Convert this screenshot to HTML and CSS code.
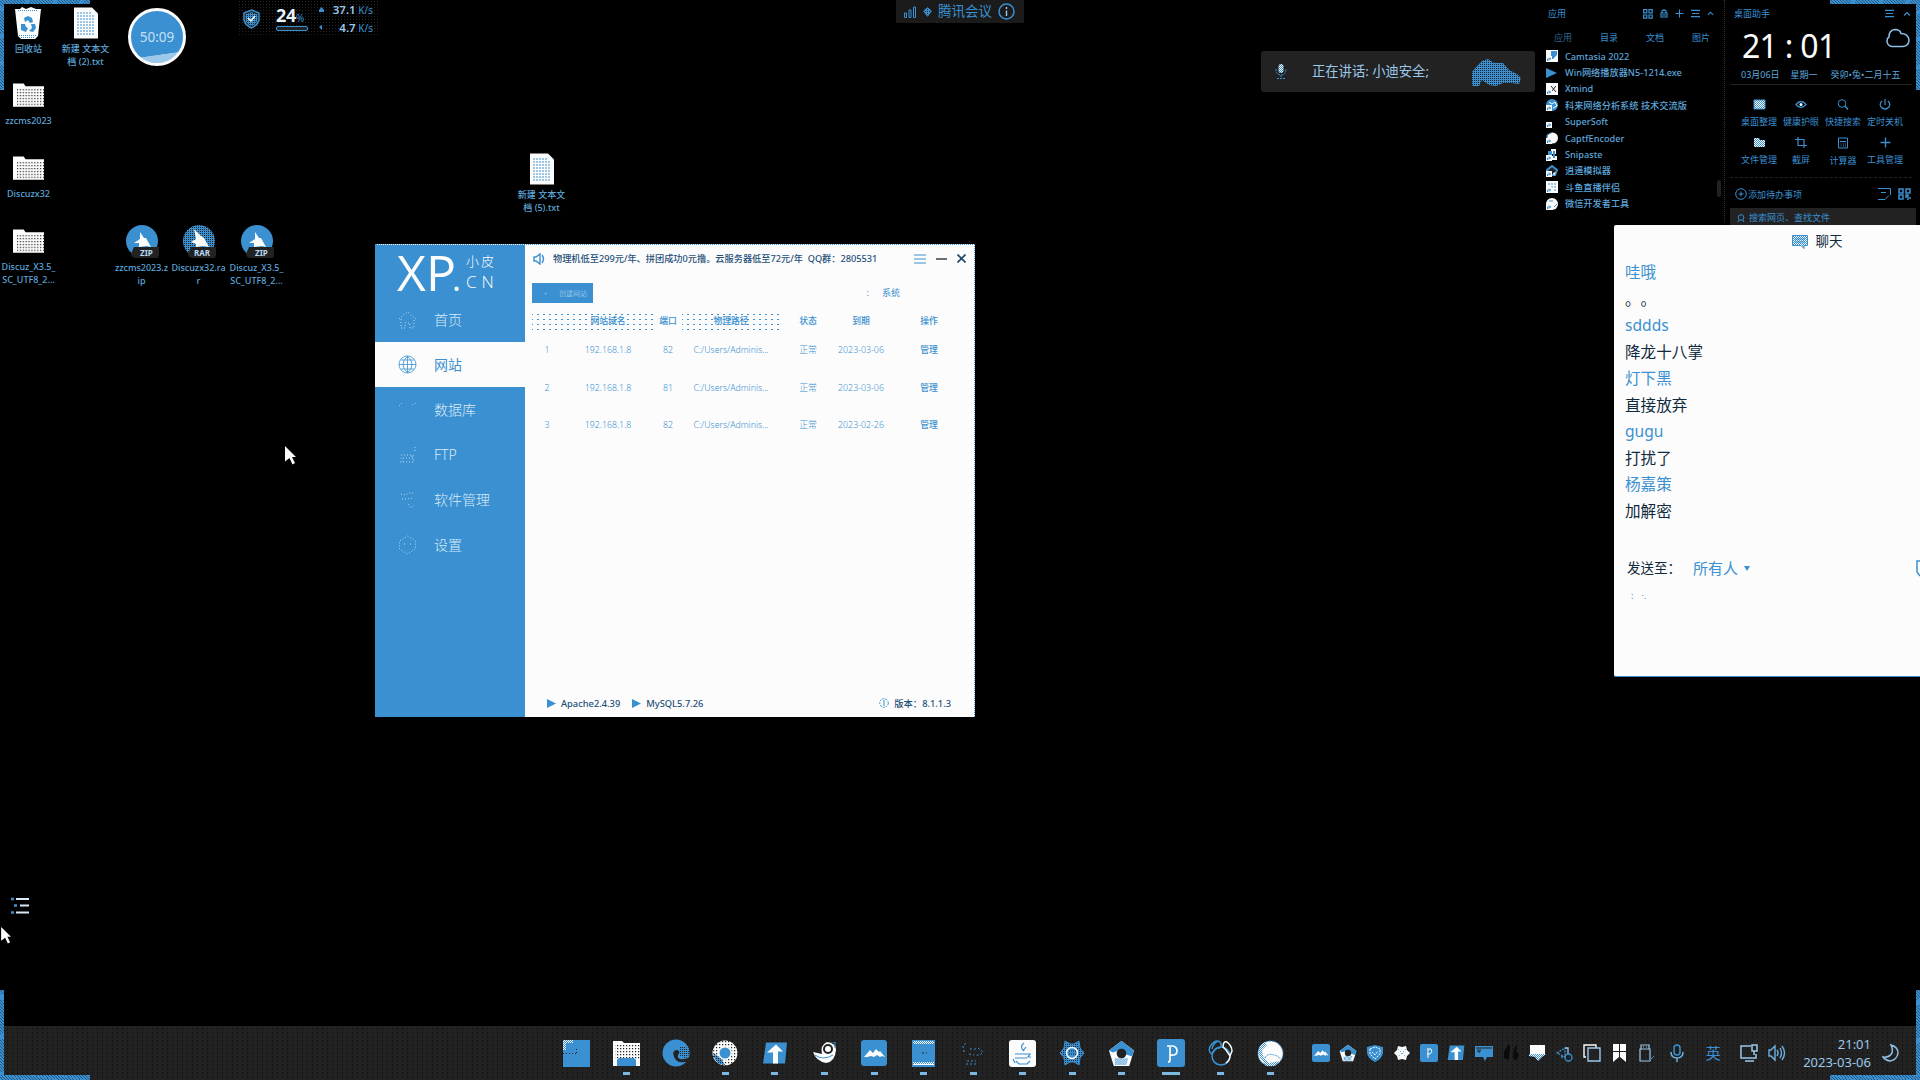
FILE: index.html
```html
<!DOCTYPE html>
<html lang="zh-CN">
<head>
<meta charset="utf-8">
<title>桌面</title>
<link rel="stylesheet" href="styles.css">
</head>
<body>
<svg class="defs" aria-hidden="true">
  <defs>
    <pattern id="weave" width="3" height="3" patternUnits="userSpaceOnUse"><path fill="#fcfcfc" d="M0 0h3v3H0z"/><path fill="#222" d="M1 1h1.2v1.2H1z"/></pattern>
    <pattern id="mesh" width="2" height="2" patternUnits="userSpaceOnUse"><path fill="#3a90d0" d="M0 0h2v2H0z"/><path fill="#222" d="M0 0h1v1H0z"/></pattern>
    <pattern id="frost" width="2" height="2" patternUnits="userSpaceOnUse"><path fill="#fcfcfc" d="M0 0h2v2H0z"/><path fill="#3a90d0" d="M0 0h1v1H0zM1 1h1v1H1z"/></pattern>
    <symbol id="folder" viewBox="0 0 32 26"><path fill="#fcfcfc" d="M0 1h11l2 3h19v21H0z"/><path fill="url(#weave)" d="M4 6h28v18H4z"/></symbol>
    <symbol id="file" viewBox="0 0 24 31"><path fill="#fcfcfc" d="M0 0h18l6 6v25H0z"/><path stroke="#3a90d0" stroke-dasharray="2 1" d="M3 5.500h14M3 8.500h18M3 11.500h18M3 14.500h18M3 17.500h18M3 20.500h18M3 23.500h18M3 26.500h18"/></symbol>
    <symbol id="cursor" viewBox="0 0 12 19"><path fill="#fcfcfc" d="M0 0l11 11H7l3 6-2.500 1.500L4.500 12 0 15.500z"/></symbol>
    <symbol id="peak" viewBox="0 0 26 26"><rect width="26" height="26" rx="3" fill="#3a90d0"/><path fill="#fcfcfc" d="M3 17l6-7 3 3 3-4 3 3 1-1 5 6-3-1-2 1-3-2-3 2-3-1-4 1z"/></symbol>
    <symbol id="arrowup" viewBox="0 0 26 24"><path fill="#3a90d0" d="M4 1h21l-2 21H1z"/><path fill="#fcfcfc" d="M14 3l7 7h-5v12h-5V11H5z"/></symbol>
    <symbol id="penta" viewBox="0 0 28 28"><path fill="#fcfcfc" d="M14 1l13 10-5 16H6L1 11z"/><path fill="#3a90d0" d="M14 1l13 10-2 6-6-2-5-5-9 3-4-2z"/><path fill="url(#frost)" d="M7 19l14 0-2 7H7z"/><circle cx="14" cy="14" r="5" fill="#222"/></symbol>
    <symbol id="grid4" viewBox="0 0 10 10"><path fill="none" stroke="#3a90d0" stroke-width="1.200" d="M.6 .6h3.200v3.200H.6zM6 .6h3.200v3.200H6zM.6 6h3.200v3.200H.6zM6 6h3.200v3.200H6z"/></symbol>
    <symbol id="bars" viewBox="0 0 10 10"><path stroke="#3a90d0" stroke-width="1.200" d="M0 1.500h10M1 5h8M0 8.500h10"/></symbol>
    <symbol id="caret" viewBox="0 0 8 8"><path fill="none" stroke="#3a90d0" stroke-width="1.200" d="M1 5.500l3-3 3 3"/></symbol>
    <symbol id="plus" viewBox="0 0 10 10"><path stroke="#3a90d0" stroke-width="1.200" d="M5 .5v9M.5 5h9"/></symbol>
    <symbol id="link" viewBox="0 0 6 6"><path fill="#fcfcfc" d="M0 0h6v6H0z"/><path fill="none" stroke="#3a90d0" d="M1.500 5V3h3M3 1.500L4.500 3 3 4.500"/></symbol>
    <symbol id="play" viewBox="0 0 9 9"><path fill="#3a90d0" d="M0 0l9 4.500L0 9z"/></symbol>
  </defs>
</svg>

<main class="desktop">
  <i class="corner tl"></i><i class="corner tr"></i>

  <div class="shortcut" style="left:0;top:7px"><svg width="27" height="32" viewBox="0 0 27 32"><path fill="#fcfcfc" d="M0 2l5 0 2-2 4 2 5-2 5 2 5 0-3 27-3 3H6l-3-3z"/><path fill="#3a90d0" d="M9 11l4-2 4 2 1 4-3 1-2-3-3 2zM6 17l4 0 1 3 2 1-2 4-5-2zM16 17h4l1 4-3 4-4-1 3-3z"/><path stroke="#3a90d0" stroke-dasharray="1 1" d="M4 28.500h18M6 30.500h14M3 3.500h20"/></svg><span>回收站</span></div>
  <div class="shortcut" style="left:57px;top:7px"><svg width="24" height="32"><use href="#file"/></svg><span>新建 文本文<br>档 (2).txt</span></div>
  <div class="shortcut" style="left:0;top:79px"><svg width="31" height="32"><use href="#folder"/></svg><span>zzcms2023</span></div>
  <div class="shortcut" style="left:0;top:152px"><svg width="31" height="32"><use href="#folder"/></svg><span>Discuzx32</span></div>
  <div class="shortcut" style="left:0;top:225px"><svg width="31" height="32"><use href="#folder"/></svg><span>Discuz_X3.5_<br>SC_UTF8_2...</span></div>
  <div class="shortcut" style="left:113px;top:225px"><svg width="34" height="33" viewBox="0 0 34 33"><circle cx="17" cy="16" r="16" fill="#3a90d0"/><path fill="#222" d="M9 22h25v8q0 3-3 3H12q-6 0-6-4z"/><path fill="#fcfcfc" d="M15 7l4 6 2 0 5 9-4-1-8 1 0-4-5 0 6-4z"/><text x="15" y="31" class="tag">ZIP</text></svg><span>zzcms2023.z<br>ip</span></div>
  <div class="shortcut" style="left:170px;top:225px"><svg width="34" height="33" viewBox="0 0 34 33"><circle cx="17" cy="16" r="16" fill="url(#mesh)"/><path fill="#222" d="M9 22h25v8q0 3-3 3H12q-6 0-6-4z"/><path fill="#fcfcfc" d="M12 4l7 7 3 2 5 9-6-1-7 1 0-3-5-2 5-3z"/><text x="12" y="31" class="tag">RAR</text></svg><span>Discuzx32.ra<br>r</span></div>
  <div class="shortcut" style="left:228px;top:225px"><svg width="34" height="33" viewBox="0 0 34 33"><circle cx="17" cy="16" r="16" fill="#3a90d0"/><path fill="#222" d="M9 22h25v8q0 3-3 3H12q-6 0-6-4z"/><path fill="#fcfcfc" d="M15 7l4 6 2 0 5 9-4-1-8 1 0-4-5 0 6-4z"/><text x="15" y="31" class="tag">ZIP</text></svg><span>Discuz_X3.5_<br>SC_UTF8_2...</span></div>
  <div class="shortcut" style="left:513px;top:153px"><svg width="24" height="32"><use href="#file"/></svg><span>新建 文本文<br>档 (5).txt</span></div>

  <div class="timer"><span>50:09</span></div>

  <section class="monitor">
    <svg width="17" height="20" viewBox="0 0 17 20"><path fill="#222" stroke="#3a90d0" stroke-width="1.500" d="M8.500 1l7.500 3v7q-1 5-7.500 8Q2 16 1 11V4z"/><path fill="url(#mesh)" d="M8.500 3l6 2.500V11q-1 4-6 6-5-2-6-6V5.500z"/><path fill="none" stroke="#fcfcfc" stroke-width="1.500" d="M5 9l3 3 4-5"/></svg>
    <div class="usage"><p><b>24</b>%</p><i></i></div>
    <div class="rates"><p><svg width="5" height="5"><path fill="#3a90d0" d="M0 3l2.500-3L5 3v2H0z"/></svg><span><b>37.1</b> K/s</span></p><p><svg width="5" height="5"><path fill="#3a90d0" d="M0 2l3-2v5z"/></svg><span><b>4.7</b> K/s</span></p></div>
  </section>

  <section class="meeting">
    <svg width="13" height="12" viewBox="0 0 13 12"><path fill="none" stroke="#3a90d0" d="M.5 7h2v4.500h-2zM5 4h2v7.500H5zM9.500 1h2v10.500h-2z"/></svg>
    <svg width="9" height="10" viewBox="0 0 9 10"><path fill="url(#mesh)" stroke="#3a90d0" d="M4.500 .7L8.300 4 4.500 9.300 .7 4z"/></svg>
    <span>腾讯会议</span>
    <svg width="17" height="17" viewBox="0 0 17 17"><circle cx="8.500" cy="8.500" r="7.500" fill="none" stroke="#3a90d0" stroke-width="1.500"/><path stroke="#9cc8ea" stroke-width="1.400" d="M8.500 4v2M8.500 7.500v5.500"/></svg>
  </section>

  <section class="speaking">
    <svg width="12" height="17" viewBox="0 0 12 17"><rect x="3.500" y="1" width="5" height="9" rx="2.500" fill="url(#frost)"/><path fill="none" stroke="#3a90d0" stroke-dasharray="2 1" d="M1 6q0 6 5 6t5-6M6 12v3M2 15.500h8"/></svg>
    <span>正在讲话: 小迪安全;</span>
    <svg class="wave" width="49" height="28" viewBox="0 0 49 28"><path fill="url(#mesh)" d="M0 14L5 8 10 3l6-2 6 4 9 0 6 7 8 4 4 4-2 6-8-1-8 0-7 3-7-1-7-5-3 6-4 1-5-3z"/></svg>
  </section>

  <section class="apps">
    <header><span>应用</span><svg width="10" height="10"><use href="#grid4"/></svg><svg width="8" height="9" viewBox="0 0 8 9"><path fill="none" stroke="#3a90d0" stroke-width="1.200" d="M2 4V2q2-2 4 0v2M1 4h6v4H1zM2 6h4"/></svg><svg width="9" height="9"><use href="#plus"/></svg><svg width="9" height="9"><use href="#bars"/></svg><svg width="7" height="7"><use href="#caret"/></svg></header>
    <nav><span class="on">应用</span><span>目录</span><span>文档</span><span>图片</span></nav>
    <ul>
      <li><svg width="12" height="12" viewBox="0 0 12 12"><rect width="12" height="12" fill="#fcfcfc"/><path fill="#3a90d0" d="M5 1h6v4L7 9H5z"/><use href="#link" y="6" width="6" height="6"/></svg>Camtasia 2022</li>
      <li><svg width="12" height="12" viewBox="0 0 12 12"><path fill="#3a90d0" d="M0 1l11 5-11 5z"/></svg>Win网络播放器N5-1214.exe</li>
      <li><svg width="12" height="12" viewBox="0 0 12 12"><rect width="12" height="12" fill="#fcfcfc"/><path stroke="#222" d="M5 3l5 6M10 3L5 9"/><use href="#link" y="6" width="6" height="6"/></svg>Xmind</li>
      <li><svg width="12" height="12" viewBox="0 0 12 12"><circle cx="6" cy="6" r="6" fill="#3a90d0"/><path stroke="#fcfcfc" fill="none" d="M3 3l3 2 3-2 2 4-4 2"/><use href="#link" y="6" width="6" height="6"/></svg>科来网络分析系统 技术交流版</li>
      <li><svg width="12" height="12" viewBox="0 0 12 12"><use href="#link" y="6" width="6" height="6"/></svg>SuperSoft</li>
      <li><svg width="12" height="12" viewBox="0 0 12 12"><circle cx="6.500" cy="6" r="5.500" fill="#fcfcfc"/><path stroke="#3a90d0" fill="none" d="M1 6V3l4-2"/><use href="#link" y="6" width="6" height="6"/></svg>CaptfEncoder</li>
      <li><svg width="12" height="12" viewBox="0 0 12 12"><path fill="#fcfcfc" d="M5 0h5v5H5zM6 7h5v4H6z"/><path fill="#3a90d0" d="M2 2h4v4H2zM7 2h2v7H7z"/><use href="#link" y="6" width="6" height="6"/></svg>Snipaste</li>
      <li><svg width="12" height="12" viewBox="0 0 12 12"><path fill="#222" stroke="#3a90d0" stroke-width="2" d="M6 1l5 4-2 5H3L1 5z"/><path fill="#fcfcfc" d="M7 8l3-1-2 4z"/><use href="#link" y="6" width="6" height="6"/></svg>逍遥模拟器</li>
      <li><svg width="12" height="12" viewBox="0 0 12 12"><rect width="12" height="12" fill="#fcfcfc"/><path stroke="#3a90d0" stroke-dasharray="2 1" d="M2 3h9M5 6h6M8 9h3"/><use href="#link" y="6" width="6" height="6"/></svg>斗鱼直播伴侣</li>
      <li><svg width="12" height="12" viewBox="0 0 12 12"><circle cx="6" cy="6" r="6" fill="#fcfcfc"/><path stroke="#3a90d0" d="M3 3h4M8 9l3-3"/><use href="#link" y="6" width="6" height="6"/></svg>微信开发者工具</li>
    </ul>
    <i class="thumb"></i>
  </section>

  <section class="helper">
    <header><span>桌面助手</span><svg width="9" height="9"><use href="#bars"/></svg><svg width="8" height="8"><use href="#caret"/></svg></header>
    <div class="clock"><b>21 : 01</b><svg width="24" height="20" viewBox="0 0 24 20"><path fill="#000" stroke="#8fc0e6" stroke-width="1.500" d="M6 18.500q-5-1-5-5.500 0-3 2-4 0-7 6-7.500 5 0 6 4 7 0 8 6.500 0 6-6 6.500z"/></svg></div>
    <div class="dates"><span>03月06日</span><span>星期一</span><span>癸卯•兔•二月十五</span></div>
    <div class="tools">
      <div><svg width="13" height="11" viewBox="0 0 13 11"><path fill="url(#frost)" stroke="#3a90d0" d="M1 1h11v9H1z"/></svg>桌面整理</div>
      <div><svg width="12" height="11" viewBox="0 0 12 11"><path fill="none" stroke="#3a90d0" stroke-width="1.300" d="M1 5.500q5-6 10 0-5 6-10 0z"/><circle cx="6" cy="5.500" r="1.500" fill="#fcfcfc"/></svg>健康护眼</div>
      <div><svg width="12" height="11" viewBox="0 0 12 11"><circle cx="5" cy="4.500" r="3.800" fill="none" stroke="#3a90d0"/><path stroke="#3a90d0" stroke-width="1.400" d="M8 7l3 3.500"/></svg>快捷搜索</div>
      <div><svg width="12" height="11" viewBox="0 0 12 11"><path fill="none" stroke="#3a90d0" stroke-width="1.200" d="M6 0v6M3 2q-3 3-1 6 4 4 8 0 2-3-1-6"/></svg>定时关机</div>
      <div><svg width="13" height="11" viewBox="0 0 13 11"><path fill="url(#frost)" d="M1 1h5l1 2h5v7H1z"/></svg>文件管理</div>
      <div><svg width="12" height="11" viewBox="0 0 12 11"><path fill="none" stroke="#3a90d0" stroke-width="1.200" d="M3 0v8.500h9M0 2.500h9V11"/></svg>截屏</div>
      <div><svg width="12" height="12" viewBox="0 0 12 12"><path fill="none" stroke="#3a90d0" d="M1.500 1h9v10h-9zM3 4.500h6M3.500 7h1M6 7h1M8 7h1M3.500 9h1M6 9h1M8 9h1"/></svg>计算器</div>
      <div><svg width="11" height="11"><use href="#plus"/></svg>工具管理</div>
    </div>
    <div class="todo"><svg width="12" height="12" viewBox="0 0 12 12"><circle cx="6" cy="6" r="5.300" fill="none" stroke="#3a90d0"/><path stroke="#3a90d0" d="M6 3.500v5M3.500 6h5"/></svg><span>添加待办事项</span><svg width="13" height="12" viewBox="0 0 13 12"><path fill="none" stroke="#3a90d0" d="M0 .5h12.500V7M3 4.500h5M0 11.500h7l4-4"/></svg><svg width="13" height="12" viewBox="0 0 13 12"><path fill="none" stroke="#3a90d0" stroke-width="1.500" d="M1 1h4v4H1zM8 1h4v4H8zM1 7h4v4H1zM8 7h2v2H8zM11 10h2M9 11h2"/></svg></div>
    <div class="find"><svg width="8" height="8" viewBox="0 0 8 8"><circle cx="4" cy="3.500" r="2.800" fill="none" stroke="#3a90d0"/><path stroke="#3a90d0" d="M2 6L1 8M6 6l1 2"/></svg>搜索网页、查找文件</div>
  </section>

  <section class="panel">
    <aside>
      <div class="brand"><b>XP<i>.</i></b><p><span>小皮</span><span class="cn">CN</span></p></div>
      <a><svg width="19" height="18" viewBox="0 0 19 18"><path d="M1 8l8.500-7L18 8M3 8v9h4v-5h5v5h4V8"/></svg>首页</a>
      <a class="on"><svg width="19" height="19" viewBox="0 0 19 19"><circle cx="9.500" cy="9.500" r="8.500"/><path d="M9.500 1v17M1 9.500h17M3 5h13M3 14h13M9.500 1q-9 8.500 0 17M9.500 1q9 8.500 0 17"/></svg>网站</a>
      <a><svg width="19" height="18" viewBox="0 0 19 18"><path d="M1 5l3-3M14 4l4-2"/></svg>数据库</a>
      <a><svg width="19" height="18" viewBox="0 0 19 18"><path d="M17 1v6M2 16h15M3 9h12v3H3l2 4M14 10l2 6"/></svg>FTP</a>
      <a><svg width="19" height="18" viewBox="0 0 19 18"><path d="M3 3l5 1 3-2 5 0M4 8h5l6-1M10 13l3 4 3-3"/></svg>软件管理</a>
      <a><svg width="19" height="20" viewBox="0 0 19 20"><path d="M9.500 1l8 5v8l-8 5-8-5V6zM6 9h1M12 9h1"/></svg>设置</a>
    </aside>
    <div class="content">
      <header><svg width="12" height="12" viewBox="0 0 12 12"><path fill="none" stroke="#3a90d0" stroke-width="1.400" d="M1 4h2l4-3v10L3 8H1zM9 2q3 4 0 8"/></svg><span>物理机低至299元/年、拼团成功0元撸。云服务器低至72元/年 &nbsp;QQ群：2805531</span>
        <svg width="12" height="10" viewBox="0 0 12 10"><path stroke="#3a90d0" stroke-width="1.200" d="M0 1h12M0 5h12M0 9h12"/></svg><svg width="11" height="10" viewBox="0 0 11 10"><path stroke="#222" stroke-width="1.300" d="M0 5h11"/></svg><svg width="9" height="9" viewBox="0 0 9 9"><path stroke="#1b4668" stroke-width="1.600" d="M.5 .5l8 8M8.500 .5l-8 8"/></svg></header>
      <div class="bar"><button><i>·</i>创建网站</button><span><i>:</i>系统</span></div>
      <div class="grid head"><span></span><span>网站域名</span><span>端口</span><span>物理路径</span><span>状态</span><span>到期</span><span>操作</span></div>
      <div class="grid"><span>1</span><span>192.168.1.8</span><span>82</span><span>C:/Users/Adminis...</span><span>正常</span><span>2023-03-06</span><b>管理</b></div>
      <div class="grid"><span>2</span><span>192.168.1.8</span><span>81</span><span>C:/Users/Adminis...</span><span>正常</span><span>2023-03-06</span><b>管理</b></div>
      <div class="grid"><span>3</span><span>192.168.1.8</span><span>82</span><span>C:/Users/Adminis...</span><span>正常</span><span>2023-02-26</span><b>管理</b></div>
      <footer><svg width="9" height="9"><use href="#play"/></svg><span>Apache2.4.39</span><svg width="9" height="9"><use href="#play"/></svg><span>MySQL5.7.26</span><svg class="info" width="10" height="10" viewBox="0 0 10 10"><circle cx="5" cy="5" r="4.300" fill="none" stroke="#3a90d0" stroke-dasharray="2 1"/><path stroke="#3a90d0" d="M5 2v6"/></svg><span>版本：8.1.1.3</span></footer>
    </div>
  </section>

  <section class="chat">
    <header><svg width="16" height="14" viewBox="0 0 16 14"><path fill="url(#frost)" stroke="#3a90d0" d="M.5 .5h15v10H12v3l-3-3H.5z"/><path stroke="#3a90d0" d="M3 4h10M3 7h10"/></svg>聊天</header>
    <div class="log">
      <p class="who">哇哦</p><p>。。</p>
      <p class="who">sddds</p><p>降龙十八掌</p>
      <p class="who">灯下黑</p><p>直接放弃</p>
      <p class="who">gugu</p><p>打扰了</p>
      <p class="who">杨嘉策</p><p>加解密</p>
    </div>
    <div class="send"><span>发送至：</span><span class="all">所有人</span><svg width="6" height="5"><path fill="#3a90d0" d="M0 0h6L3 5z"/></svg><svg class="edge" width="4" height="17" viewBox="0 0 4 17"><path fill="none" stroke="#3a90d0" stroke-width="1.500" d="M4 1H1v11l3 4"/></svg></div>
    <div class="dots"><i>:</i><i>·.</i></div>
  </section>

  <svg class="pointer" style="left:285px;top:446px" width="12" height="19"><use href="#cursor"/></svg>
  <svg class="pointer" style="left:1px;top:927px" width="11" height="17"><use href="#cursor"/></svg>
  <svg class="pointer" style="left:10px;top:897px" width="20" height="18" viewBox="0 0 20 18"><path stroke="#3a90d0" stroke-width="2.400" d="M1 2h3M4 8.500h3M1 15.500h3"/><path stroke="#d8eaf8" stroke-width="2.200" d="M6 2h13M10 8.500h9M6 15.500h13"/></svg>
</main>

<footer class="taskbar">
  <div class="dock">
    <a class="idle"><svg width="27" height="27" viewBox="0 0 27 27"><rect width="27" height="27" fill="#3a90d0"/><path fill="url(#frost)" d="M0 0h10v3H3v7H0z"/><path stroke="#222" stroke-dasharray="1 2" d="M0 13.500h14M13.500 9v5"/></svg></a>
    <a><svg width="27" height="25" viewBox="0 0 27 25"><path fill="#fcfcfc" d="M0 0h9l2 2h16v23H0z"/><path fill="url(#weave)" d="M2 4h25v14H2z"/><path fill="#3a90d0" d="M4 25v-6l2-2h15l2 2v6z"/></svg></a>
    <a class="idle"><svg width="28" height="28" viewBox="0 0 28 28"><circle cx="14" cy="14" r="13.500" fill="#3a90d0"/><path fill="url(#mesh)" d="M18 7q9-1 9 8-1 4-5 4l-5-3z"/><path fill="#222" d="M11 14q2-5 6-2 1 2-1 4-1 3 2 4 4 1 10-2l1 5-7 0q-9 2-11-9z"/></svg></a>
    <a><svg width="26" height="26" viewBox="0 0 26 26"><circle cx="13" cy="13" r="12.500" fill="url(#weave)"/><path fill="url(#mesh)" d="M1 13l8 5 4 7Q3 25 1 13z"/><circle cx="13" cy="13" r="7" fill="#fcfcfc"/><circle cx="13" cy="13" r="5.500" fill="#3a90d0"/></svg></a>
    <a><svg width="26" height="25"><use href="#arrowup"/></svg></a>
    <a><svg width="24" height="22" viewBox="0 0 24 22"><path fill="#fcfcfc" d="M0 10l9 2q-2-9 5-12 9 1 9 8-1 12-10 13Q3 19 0 10z"/><circle cx="15" cy="7" r="4" fill="none" stroke="#222" stroke-width="2"/><path stroke="#3a90d0" fill="none" d="M2 13q8 6 18 0M16 0h6v6"/></svg></a>
    <a><svg width="26" height="26"><use href="#peak"/></svg></a>
    <a><svg width="23" height="27" viewBox="0 0 23 27"><rect width="23" height="27" fill="#3a90d0"/><path fill="url(#frost)" d="M1 1h21v3H1zM1 22h21v2H1z"/><path stroke="#fcfcfc" d="M1 24.500h21"/><path stroke="#222" stroke-dasharray="2 2" d="M10 13h5"/></svg></a>
    <a><svg width="22" height="26" viewBox="0 0 22 26"><path fill="none" stroke="#3a90d0" stroke-dasharray="2 2" d="M2 12L1 6l4-4M8 9h6M16 8l5 4-3 3h-4M7 14l5 1M5 21h9M4 24h10"/></svg></a>
    <a><svg width="27" height="27" viewBox="0 0 27 27"><rect width="27" height="27" rx="3" fill="#fcfcfc"/><path fill="none" stroke="#3a90d0" stroke-width="1.200" d="M15 3q-5 4 0 8M17 7l-3 4M6 14h15l-2 3 3 0M6 18h12M7 21l3 3h8l3-3M4 19l2 4"/></svg></a>
    <a><svg width="26" height="26" viewBox="0 0 26 26"><path fill="url(#mesh)" stroke="#3a90d0" d="M6 1l5 3h4l5-3 1 7 4 5-4 5-1 7-5-3h-4l-5 3-1-7-4-5 4-5z"/><circle cx="13" cy="13" r="5.500" fill="#3a90d0" stroke="#fcfcfc" stroke-width="1.500"/><path stroke="#222" stroke-dasharray="1 1" d="M10 11h7M10 14h7"/></svg></a>
    <a><svg width="27" height="27"><use href="#penta"/></svg></a>
    <a class="wide"><svg width="28" height="28" viewBox="0 0 28 28"><rect width="28" height="28" rx="3" fill="#3a90d0"/><path fill="none" stroke="#fcfcfc" stroke-width="1.700" d="M11 8V7h5q4 1 4 5 0 5-7 4M13 8v13q0 2-2 2"/></svg></a>
    <a><svg width="25" height="26" viewBox="0 0 25 26"><g fill="none" stroke="#3a90d0" stroke-width="1.500"><circle cx="13" cy="16" r="9"/><path d="M4 14Q-1 11 3 5q5-6 9-3 3 4-1 6-4 0-7 6M10 1q-5 2-6 8"/></g><path fill="none" stroke="#fcfcfc" stroke-width="1.500" d="M15 7q0-6 4-5 5 4 5 9l-2 5-4-6zM22 16q0 4-4 7"/></svg></a>
    <a><svg width="27" height="27" viewBox="0 0 27 27"><circle cx="13.500" cy="13.500" r="12.500" fill="#fcfcfc" stroke="#3a90d0" stroke-dasharray="2 1"/><path fill="url(#frost)" d="M1 14L3 6l5-4 2 3-5 5 1 6 6 7 10-2-4 5-9 0z"/><path fill="none" stroke="#3a90d0" stroke-dasharray="2 1" d="M8 18q3-6 12-2l4 3"/></svg></a>
  </div>
  <div class="tray">
    <svg width="18" height="18"><use href="#peak"/></svg>
    <svg width="18" height="18"><use href="#penta"/></svg>
    <svg viewBox="0 0 18 18"><path fill="#3a90d0" d="M1 3l8-2 8 2v6q-1 6-8 9-7-3-8-9z"/><path fill="none" stroke="#fcfcfc" stroke-dasharray="2 1" d="M4 5l5-2 5 2v5l-5 5-5-5zM6 8l3 3 3-4"/></svg>
    <svg viewBox="0 0 18 18"><path fill="#fcfcfc" d="M5 2l4 1 4-1 1 4 3 3-3 3-1 4-4-1-4 1-1-4-3-3 3-3z"/><path stroke="#3a90d0" stroke-dasharray="1 2" d="M5 5l8 8M13 5l-8 8"/></svg>
    <svg viewBox="0 0 18 18"><rect width="18" height="18" rx="2" fill="#3a90d0"/><path fill="none" stroke="#fcfcfc" d="M7 5h4q2 3-1 5H7M8 5v9"/></svg>
    <svg width="18" height="18"><use href="#arrowup"/></svg>
    <svg viewBox="0 0 18 18"><path fill="#3a90d0" d="M0 2h18v11h-6l-2 4-2-4H0z"/><path stroke="#222" fill="none" d="M1 4h16M3 5v3h2V5"/></svg>
    <svg viewBox="0 0 18 18"><path fill="#0a0a0a" d="M6 1l2 0-1 15-5-2V8zM12 4l3-3-1 6 3 4-3 6-3-3z"/></svg>
    <svg viewBox="0 0 18 18"><path fill="#fcfcfc" d="M1 1h15v10H1z"/><path fill="url(#frost)" d="M0 10h17l-4 3-4 4-3-4-6-1z"/></svg>
    <svg viewBox="0 0 18 18"><path fill="none" stroke="#3a90d0" stroke-width="1.300" stroke-dasharray="2 1" d="M1 9l8-5v9zM5 13h5"/><path fill="none" stroke="#9cc8ea" stroke-width="1.300" d="M9 4h3v6"/><circle cx="12.500" cy="13.500" r="3.500" fill="none" stroke="#3a90d0" stroke-width="1.300"/></svg>
    <svg viewBox="0 0 18 18"><path fill="none" stroke="#fcfcfc" stroke-width="1.400" d="M3 13H1V1h12v3"/><path fill="#222" stroke="#9cc8ea" stroke-width="1.400" d="M5 4h12v13H5z"/></svg>
    <svg viewBox="0 0 18 18"><path fill="#fcfcfc" d="M3 0h6v7H3zM10 0h6v7h-6zM3 8h6v5l-6 5zM10 8h6v10l-6-5z"/></svg>
    <svg viewBox="0 0 18 18"><path fill="none" stroke="#9cc8ea" stroke-width="1.200" d="M4 5V1h8v4M3 5h10v12H3zM6 3h1M9 3h1"/><path stroke="#3a90d0" d="M12 17l5-5"/></svg>
    <svg viewBox="0 0 18 18"><rect x="6" y="1" width="6" height="10" rx="3" fill="none" stroke="#3a90d0" stroke-width="1.500"/><path fill="none" stroke="#6fb0e0" stroke-width="1.500" d="M3 8q0 6 6 6t6-6M9 14v4"/></svg>
    <span class="ime">英</span>
    <svg viewBox="0 0 18 18"><path fill="none" stroke="#9cc8ea" stroke-width="1.500" d="M11 2H1v12h15v-4M5 17h9M12 1h5v6h-5zM14 7v4"/></svg>
    <svg viewBox="0 0 18 18"><path fill="none" stroke="#6fb0e0" stroke-width="1.400" d="M1 6h2l4-4v14l-4-4H1zM9 6q2 3 0 6M12 4q3 5 0 10M14 2q5 7 0 14"/></svg>
  </div>
  <div class="when">21:01<br>2023-03-06</div>
  <svg class="moon" width="17" height="18" viewBox="0 0 17 18"><path fill="none" stroke="#8fc0e6" stroke-width="1.500" d="M9 1q7 2 7 8-1 7-8 8-5-1-7-4 6 1 9-4 1-4-1-8z"/></svg>
  <i class="corner bl"></i><i class="corner br"></i>
</footer>
</body>
</html>
```
FILE: styles.css
```css
* { box-sizing: border-box; }
:root { --blue: #3a90d0; --white: #fcfcfc; --gray: #222; }
body {
  margin: 0;
  width: 1920px;
  height: 1080px;
  overflow: hidden;
  display: flex;
  flex-direction: column;
  background: #000;
  color: var(--blue);
  font: 9px/13px "Noto Sans", "Noto Sans CJK SC", sans-serif;
}
p { margin: 0; }
i { font-style: normal; }
svg { display: block; flex: none; }
span { white-space: nowrap; }
.defs { position: absolute; width: 0; height: 0; }
.desktop { position: relative; flex: 1; }

.corner {
  position: absolute;
  width: 90px;
  height: 90px;
  border: 0 solid;
  border-image: repeating-linear-gradient(45deg, #3a90d0 0 1.500px, #25587e 1.500px 2.100px) 4;
  z-index: 5;
}
.tl { left: 0; top: 0; border-width: 4px 0 0 4px; }
.tr { right: 0; top: 0; border-width: 4px 4px 0 0; }
.bl { left: 0; bottom: 0; border-width: 0 0 5px 4px; }
.br { right: 0; bottom: 0; border-width: 0 4px 5px 0; }

.shortcut {
  position: absolute;
  width: 57px;
  display: flex;
  flex-direction: column;
  align-items: center;
  gap: 3px;
  text-align: center;
  color: #5da7dc;
  font-weight: 500;
}
.tag { font-size: 8px; font-weight: 700; fill: #b9daf2; }

.timer {
  position: absolute;
  left: 128px;
  top: 8px;
  width: 58px;
  height: 58px;
  border: 3px solid var(--white);
  border-radius: 50%;
  display: flex;
  align-items: center;
  justify-content: center;
  background: linear-gradient(172deg, var(--blue) 80%, #9cc8ea 81%);
  color: #c6e0f4;
  font-size: 13.500px;
}

.monitor {
  position: absolute;
  left: 238px;
  top: 0;
  width: 141px;
  height: 37px;
  padding: 0 6px 0 5px;
  display: flex;
  align-items: center;
  background: radial-gradient(#252525 .7px, transparent .9px) 0 0 / 3px 3px;
}
.usage { margin: 0 auto 0 16px; width: 32px; }
.usage p { font-size: 10px; line-height: 18px; height: 20px; white-space: nowrap; letter-spacing: -.3px; }
.usage b { font-size: 18px; color: #e8f3fb; }
.usage i { display: block; height: 5px; border: 1px solid var(--blue); background: var(--gray); border-radius: 2px; }
.rates { width: 54px; font-size: 10px; line-height: 17px; }
.rates p { display: flex; align-items: center; justify-content: space-between; }
.rates b { font-size: 11.500px; font-weight: 600; color: #9cc8ea; }

.meeting {
  position: absolute;
  left: 896px;
  top: 0;
  width: 128px;
  height: 23px;
  padding-left: 8px;
  display: flex;
  align-items: center;
  gap: 6px;
  background: radial-gradient(#1c1c1c .7px, transparent .9px) 0 0 / 2px 2px, #050505;
  font-size: 13.500px;
}
.speaking {
  position: absolute;
  left: 1261px;
  top: 51px;
  width: 274px;
  height: 41px;
  padding: 0 14px;
  display: flex;
  align-items: center;
  background: var(--gray);
  border-radius: 3px;
  color: #9cc8ea;
  font-size: 13.300px;
}
.speaking span { margin: 0 auto 0 25px; }

.apps {
  position: absolute;
  left: 1540px;
  top: 0;
  width: 185px;
  height: 222px;
  padding: 6px 6px 0 6px;
  border-right: 1px dotted #333;
}
.apps header { display: flex; align-items: center; gap: 7px; height: 15px; padding: 0 4px 0 2px; }
.apps header span, .helper header span { margin-right: auto; }
.apps nav { display: flex; gap: 28px; height: 27px; padding: 10px 0 0 8px; }
.apps nav .on { color: #2b628b; }
.apps ul { margin: 0; padding: 0; list-style: none; color: #5da7dc; font-size: 9.200px; font-weight: 500; }
.apps li { display: flex; align-items: center; gap: 7px; height: 16.400px; white-space: nowrap; }
.thumb { position: absolute; right: 3px; top: 180px; width: 4px; height: 17px; background: var(--gray); border-radius: 2px; }

.helper {
  position: absolute;
  left: 1730px;
  top: 0;
  width: 186px;
  height: 225px;
  padding-top: 6px;
  display: flex;
  flex-direction: column;
}
.helper header { display: flex; align-items: center; gap: 9px; height: 15px; padding: 0 5px 0 4px; }
.clock { display: flex; justify-content: space-between; height: 45px; padding: 7px 6px 0 12px; }
.clock b { font: 400 32px/36px "Noto Sans", sans-serif; color: var(--white); white-space: pre; letter-spacing: -.7px; }
.dates { display: flex; gap: 11px; height: 19px; padding: 2px 0 0 11px; margin-right: 4px; border-bottom: 1px solid var(--gray); color: #5da7dc; }
.dates span:last-child { margin-left: 2px; }
.tools {
  display: grid;
  grid-template-columns: repeat(4, 42px);
  grid-auto-rows: 37.500px;
  height: 93px;
  padding: 14px 0 0 8px;
  margin-right: 4px;
  border-bottom: 1px dashed var(--gray);
}
.tools div { display: flex; flex-direction: column; align-items: center; gap: 5px; white-space: nowrap; }
.todo { display: flex; align-items: center; gap: 1px; height: 30px; padding: 2px 5px 0 5px; }
.todo span { margin-right: auto; }
.todo svg + svg { margin-left: 6px; }
.find {
  display: flex;
  align-items: center;
  gap: 4px;
  height: 17px;
  padding: 2px 0 0 7px;
  background: radial-gradient(#242424 .7px, transparent .9px) 0 0 / 2px 2px, #0c0c0c;
}

.panel {
  position: absolute;
  left: 375px;
  top: 244px;
  width: 600px;
  height: 473px;
  display: flex;
  border-top: 1px dotted var(--blue);
  border-right: 1px dotted var(--blue);
  background: var(--white);
}
aside { flex: none; width: 150px; background: var(--blue); color: #d8eaf8; font-size: 14px; }
.brand { display: flex; height: 52px; padding: 1px 0 0 22px; color: var(--white); }
.brand b { flex: none; width: 69px; font: 400 50px/52px "Open Sans", sans-serif; white-space: nowrap; }
.brand b i { font-size: 34px; margin-left: -4px; }
.brand p { display: flex; flex-direction: column; padding-top: 6px; }
.brand p span { font-weight: 300; font-size: 13px; line-height: 19px; letter-spacing: 2px; }
.brand p .cn { font: 300 17px/22px "Open Sans", sans-serif; letter-spacing: 5px; }
aside a { display: flex; align-items: center; gap: 17px; height: 45px; padding-left: 23px; font-weight: 300; }
aside a svg { fill: none; stroke: #b9daf2; stroke-dasharray: 1 2; }
aside .on { background: var(--white); color: var(--blue); font-weight: 400; }
aside .on svg { stroke: var(--blue); stroke-dasharray: none; stroke-width: .8; }
.content { flex: 1; min-width: 0; display: flex; flex-direction: column; padding: 0 8px 0 7px; }
.content header { display: flex; align-items: center; gap: 10px; height: 27px; padding-left: 1px; color: #1e5079; font-size: 9.200px; font-weight: 500; }
.content header span { margin-right: auto; margin-left: -2px; }
.bar { display: flex; align-items: center; justify-content: space-between; height: 39px; padding-top: 2px; }
.bar button { width: 61px; height: 20px; border: 0; padding: 0 0 0 10px; background: var(--blue); color: #b9daf2; font: 300 7px/20px "Noto Sans CJK SC", sans-serif; display: flex; gap: 10px; }
.bar span { display: flex; gap: 13px; margin-right: 66px; }
.grid {
  flex: none;
  display: grid;
  grid-template-columns: 30px 92px 28px 98px 56px 50px 86px;
  align-items: center;
  height: 37.500px;
  margin-right: -8px;
  text-align: center;
  font-size: 8.800px;
  font-weight: 300;
}
.grid b { font-weight: 500; }
.head { height: 20px; margin-bottom: 1px; font-weight: 500; }
.head span { display: grid; place-items: center; align-self: stretch; }
.head span:nth-child(-n+2), .head span:nth-child(4) { background: radial-gradient(#3a90d0 .5px, transparent .8px) 3px 1px / 6px 5px; }
.content footer { display: flex; align-items: center; gap: 5px; height: 28px; margin-top: auto; padding: 0 15px; color: #1e5079; font-size: 9.300px; font-weight: 500; }
.content footer span + svg { margin-left: 7px; }
.content footer .info { margin-left: auto; }

.chat {
  position: absolute;
  left: 1614px;
  top: 225px;
  width: 306px;
  height: 452px;
  background: var(--white);
  border-bottom: 1px solid var(--blue);
  border-radius: 2px 0 0 2px;
  color: #102a3d;
}
.chat header { display: flex; align-items: center; justify-content: center; gap: 8px; height: 33px; padding-left: 100px; font-size: 13.500px; }
.log { padding: 1px 12px 0 11px; font-size: 15.600px; line-height: 26.500px; text-spacing-trim: space-all; }
.who { color: var(--blue); }
.send { display: flex; align-items: center; height: 28px; margin-top: 30px; padding-left: 13px; font-size: 13.500px; }
.send .all { color: var(--blue); font-size: 15px; margin: 0 6px 0 12px; }
.edge { margin-left: auto; }
.dots { display: flex; gap: 8px; padding: 7px 0 0 17px; color: var(--blue); }
.pointer { position: absolute; }

.taskbar {
  position: relative;
  display: flex;
  align-items: flex-start;
  height: 54px;
  background: radial-gradient(#0c0c0c .5px, transparent .8px) 0 1px / 5px 4px, var(--gray);
}
.dock { display: flex; margin-left: 552px; width: 749px; }
.dock a { flex: none; width: 49.550px; height: 50px; display: grid; grid-template-rows: 46px 3px; justify-items: center; align-items: center; }
.dock a svg { margin-top: 8px; }
.dock a::after { content: ""; width: 7px; height: 3px; background: #7db8e3; }
.dock .idle::after { visibility: hidden; }
.dock .wide::after { width: 18px; }
.tray { display: flex; align-items: center; gap: 9.100px; height: 54px; padding-left: 11px; }
.tray svg { width: 18px; height: 18px; }
.tray svg:nth-of-type(14) { margin-left: 4px; }
.ime { width: 18px; font-size: 15px; text-align: center; margin: 0 9px; }
.when { margin-left: auto; padding-top: 9px; color: #9cc8ea; font-size: 13px; line-height: 18px; text-align: right; }
.moon { margin: 18px 21px 0 11px; }
```
